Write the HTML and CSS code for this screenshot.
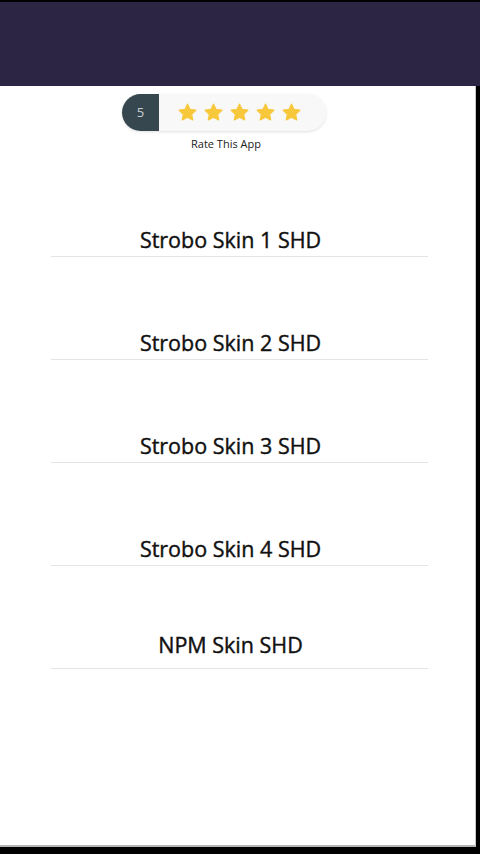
FILE: index.html
```html
<!DOCTYPE html>
<html lang="en">
<head>
    <meta charset="UTF-8">
    <title>Strobo Skins</title>
    <link rel="stylesheet" href="styles.css">
</head>
<body>
    <div class="screen">
        <div class="appbar"></div>
        <div class="content">
            <div class="rating">
                <div class="rating-pill">
                    <span class="rating-count">5</span>
                    <span class="stars">
                        <svg class="star" viewBox="0 0 24 24"><path d="M12 2.5l2.9 6 6.6.9-4.8 4.6 1.2 6.5L12 17.4l-5.9 3.1 1.2-6.5-4.8-4.6 6.6-.9z"/></svg>
                        <svg class="star" viewBox="0 0 24 24"><path d="M12 2.5l2.9 6 6.6.9-4.8 4.6 1.2 6.5L12 17.4l-5.9 3.1 1.2-6.5-4.8-4.6 6.6-.9z"/></svg>
                        <svg class="star" viewBox="0 0 24 24"><path d="M12 2.5l2.9 6 6.6.9-4.8 4.6 1.2 6.5L12 17.4l-5.9 3.1 1.2-6.5-4.8-4.6 6.6-.9z"/></svg>
                        <svg class="star" viewBox="0 0 24 24"><path d="M12 2.5l2.9 6 6.6.9-4.8 4.6 1.2 6.5L12 17.4l-5.9 3.1 1.2-6.5-4.8-4.6 6.6-.9z"/></svg>
                        <svg class="star" viewBox="0 0 24 24"><path d="M12 2.5l2.9 6 6.6.9-4.8 4.6 1.2 6.5L12 17.4l-5.9 3.1 1.2-6.5-4.8-4.6 6.6-.9z"/></svg>
                    </span>
                </div>
                <p class="rating-label">Rate This App</p>
            </div>
            <ul class="skin-list">
                <li class="skin-item"><span>Strobo Skin 1 SHD</span></li>
                <li class="skin-item"><span>Strobo Skin 2 SHD</span></li>
                <li class="skin-item"><span>Strobo Skin 3 SHD</span></li>
                <li class="skin-item"><span>Strobo Skin 4 SHD</span></li>
                <li class="skin-item skin-item-last"><span>NPM Skin SHD</span></li>
            </ul>
        </div>
    </div>
</body>
</html>
```

FILE: styles.css
```css
body {
    margin: 0;
    background: #000;
    font-family: "Open Sans", "Noto Sans", sans-serif;
    color: #111;
}
.screen {
    height: 854px;
    padding-top: 2px;
    box-sizing: border-box;
    background: #000;
    overflow: hidden;
}
.appbar {
    height: 84px;
    background-color: #2c2543;
}
.content {
    width: 476px;
    height: 761px;
    background: #fff;
    border-right: 1px solid #c8c8c8;
    border-bottom: 2px solid #b4b4b4;
    box-sizing: border-box;
}
.rating {
    display: flex;
    flex-direction: column;
    align-items: center;
    width: 204px;
    margin-left: 122px;
    padding-top: 8px;
}
.rating-pill {
    display: flex;
    align-items: center;
    width: 204px;
    height: 37px;
    border-radius: 19px;
    background: #f8f8f8;
    box-shadow: 0 1px 3px rgba(0, 0, 0, 0.12);
}
.rating-count {
    width: 37px;
    height: 37px;
    line-height: 37px;
    border-radius: 19px 0 0 19px;
    background-color: #37474f;
    color: #c9d0d3;
    text-align: center;
    font-size: 13px;
}
.stars {
    display: flex;
    gap: 5px;
    margin-left: 18px;
}
.star {
    width: 21px;
    height: 21px;
    fill: #f8c83c;
    stroke: #f8c83c;
    stroke-width: 1.5;
    stroke-linejoin: round;
}
.rating-label {
    margin: 5px 0 0;
    font-size: 11px;
    color: #222;
    padding-left: 4px;
}
.skin-list {
    list-style: none;
    margin: 0 47px 0 51px;
    padding: 0;
}
.skin-item {
    height: 103px;
    display: flex;
    align-items: flex-end;
    justify-content: center;
    border-bottom: 1px solid #e4e4e4;
    box-sizing: border-box;
}
.skin-item:first-child {
    height: 106px;
}
.skin-item span {
    font-size: 21.5px;
    line-height: 26px;
    -webkit-text-stroke: 0.4px #111;
    padding: 0 18px 3px 0;
}
.skin-item-last span {
    padding-bottom: 10px;
}
```
